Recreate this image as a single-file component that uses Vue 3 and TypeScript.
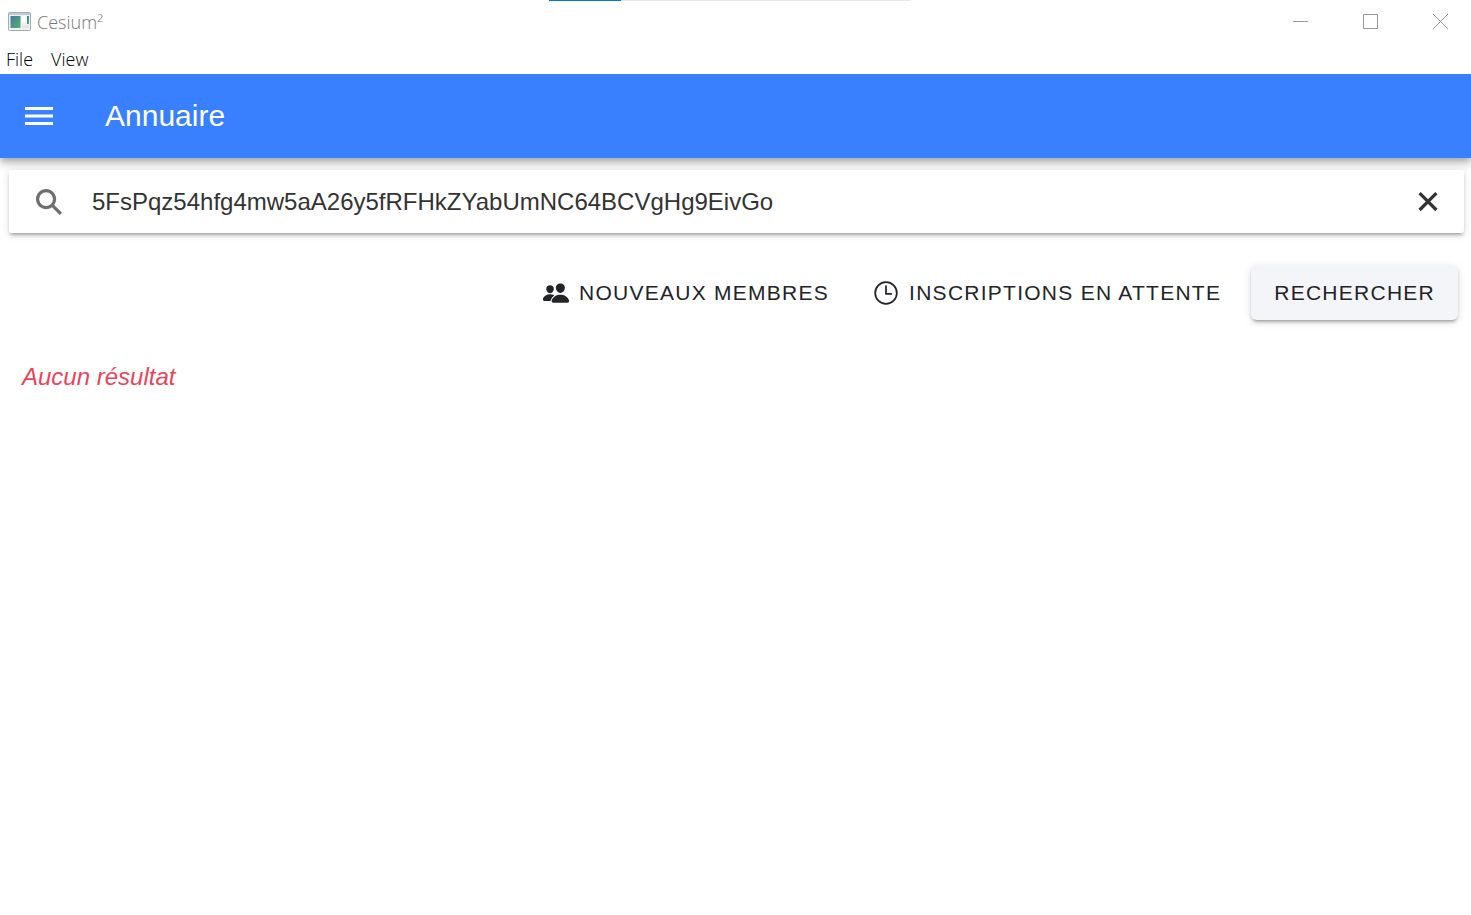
<script setup lang="ts">
import { ref } from 'vue'

const query = ref('5FsPqz54hfg4mw5aA26y5fRFHkZYabUmNC64BCVgHg9EivGo')
const menus: string[] = ['File', 'View']
</script>

<template>
  <div class="window">
    <div class="progress"><div class="progress-value"></div></div>

    <div class="titlebar">
      <svg class="app-icon" width="24" height="20" viewBox="0 0 24 20" aria-hidden="true">
        <defs>
          <linearGradient id="screen" x1="0" y1="0" x2="1" y2="1">
            <stop offset="0" stop-color="#3f78a8" />
            <stop offset="1" stop-color="#58b36c" />
          </linearGradient>
        </defs>
        <rect x="0.5" y="0.5" width="22" height="18" rx="1" fill="#eef0f1" stroke="#a3abb2" />
        <rect x="1" y="1" width="21" height="2" fill="#c3cad0" />
        <rect x="2.5" y="4" width="10" height="12" fill="url(#screen)" />
        <rect x="14" y="4" width="4" height="7" fill="#fafafa" />
        <rect x="19" y="4" width="2" height="8" fill="url(#screen)" />
        <rect x="14" y="13" width="7" height="3" fill="#e2e4e5" />
      </svg>
      <span class="app-name">Cesium²</span>
      <div class="window-controls">
        <button type="button" aria-label="Minimize">
          <svg width="15" height="15" viewBox="0 0 15 15"><path d="M0 7.5H15" /></svg>
        </button>
        <button type="button" aria-label="Maximize">
          <svg width="15" height="15" viewBox="0 0 15 15"><path d="M.5.5H14.5V14.5H.5Z" /></svg>
        </button>
        <button type="button" aria-label="Close">
          <svg width="15" height="15" viewBox="0 0 15 15"><path d="M0 0L15 15M15 0L0 15" /></svg>
        </button>
      </div>
    </div>

    <nav class="menubar">
      <button v-for="menu in menus" :key="menu" type="button">{{ menu }}</button>
    </nav>

    <header class="header">
      <button class="menu-button" type="button" aria-label="Menu">
        <svg width="28" height="20" viewBox="0 0 28 20">
          <path d="M0 2.5H28M0 10H28M0 17.5H28" fill="none" stroke="#fff" stroke-width="3" />
        </svg>
      </button>
      <h1>Annuaire</h1>
    </header>

    <main>
      <form class="searchbar" role="search" @submit.prevent>
        <svg class="search-icon" width="32" height="32" viewBox="0 0 512 512" aria-hidden="true">
          <path d="M464 428L339.92 303.9a160.48 160.48 0 0030.72-94.58C370.64 120.37 298.27 48 209.32 48S48 120.37 48 209.32s72.37 161.32 161.32 161.32a160.48 160.48 0 0094.58-30.72L428 464zM209.32 319.69a110.38 110.38 0 11110.37-110.37 110.5 110.5 0 01-110.37 110.37z" />
        </svg>
        <input v-model="query" type="text" aria-label="Rechercher" spellcheck="false" />
        <button class="clear" type="button" aria-label="Effacer" @click="query = ''">
          <svg width="20" height="20" viewBox="0 0 20 20">
            <path d="M1.6 1.2L18.4 18M18.4 1.2L1.6 18" fill="none" stroke="#333" stroke-width="3.2" />
          </svg>
        </button>
      </form>

      <div class="actions">
        <button class="action" type="button">
          <svg width="28" height="28" viewBox="0 0 512 512" aria-hidden="true">
            <path fill="currentColor" d="M336 256c-20.56 0-40.44-9.18-56-25.84-15.13-16.25-24.37-37.92-26-61-1.74-24.62 5.77-47.26 21.14-63.76S312 80 336 80c23.83 0 45.38 9.06 60.7 25.52 15.47 16.62 23 39.22 21.26 63.63-1.67 23.11-10.9 44.77-26 61C376.44 246.82 356.57 256 336 256zM467.83 432H204.18a27.71 27.71 0 01-22-10.67 30.22 30.22 0 01-5.26-25.79c8.42-33.81 29.28-61.85 60.32-81.08C264.79 297.4 299.86 288 336 288c36.85 0 71 9 98.71 26.05 31.11 19.13 52 47.33 60.38 81.55a30.27 30.27 0 01-5.32 25.78A27.68 27.68 0 01467.83 432zM147 260c-35.19 0-66.13-32.72-69-72.93-1.42-20.6 5-39.65 18-53.62 12.86-13.83 31-21.45 51-21.45s38 7.66 50.93 21.57c13.1 14.08 19.5 33.09 18 53.52-2.87 40.2-33.8 72.91-68.93 72.91zM212.66 291.45c-17.59-8.6-40.42-12.9-65.65-12.9-29.46 0-58.07 7.68-80.57 21.62-25.51 15.83-42.67 38.88-49.6 66.71a27.39 27.39 0 004.79 23.36A25.32 25.32 0 0041.72 400h111a8 8 0 007.87-6.57c.11-.63.25-1.26.41-1.88 8.48-34.06 28.35-62.84 57.71-83.82a8 8 0 00-.63-13.39c-1.57-.92-3.37-1.89-5.42-2.89z" />
          </svg>
          <span>NOUVEAUX MEMBRES</span>
        </button>
        <button class="action" type="button">
          <svg width="28" height="28" viewBox="0 0 512 512" aria-hidden="true">
            <g fill="none" stroke="currentColor" stroke-width="32">
              <circle cx="256" cy="256" r="198" />
              <path d="M256 128v144h96" stroke-linecap="round" stroke-linejoin="round" />
            </g>
          </svg>
          <span>INSCRIPTIONS EN ATTENTE</span>
        </button>
        <button class="action solid" type="button">RECHERCHER</button>
      </div>

      <p class="empty">Aucun résultat</p>
    </main>
  </div>
</template>

<style>
body {
  margin: 0;
  background: #fff;
}
</style>

<style scoped>
.window {
  min-height: 100vh;
  background: #fff;
  font-family: "Liberation Sans", Arial, sans-serif;
}

button {
  margin: 0;
  padding: 0;
  border: 0;
  background: none;
  color: inherit;
  font: inherit;
}

svg {
  display: block;
  flex: none;
}

.progress {
  position: absolute;
  z-index: 2;
  top: 0;
  left: 549px;
  width: 361px;
  height: 1px;
  background: #e6e6e6;
}

.progress-value {
  width: 20%;
  height: 1px;
  background: #0078d7;
}

.titlebar,
.menubar {
  position: relative;
  z-index: 1;
  display: flex;
  background: #fff;
  font-family: "Open Sans", "Noto Sans", sans-serif;
  font-size: 18px;
  font-weight: 300;
}

.titlebar {
  align-items: center;
  height: 43px;
  padding: 0 23px 0 8px;
  color: #777;
}

.app-name {
  margin-left: 5px;
}

.window-controls {
  display: flex;
  gap: 55px;
  margin-left: auto;
}

.window-controls path {
  fill: none;
  stroke: #999;
  stroke-width: 1;
}

.menubar {
  gap: 18px;
  height: 31px;
  padding-left: 6px;
  color: #000;
}

.header {
  display: flex;
  align-items: center;
  height: 84px;
  padding-left: 25px;
  background: #3880ff;
  color: #fff;
  box-shadow: 0 3px 6px -1px rgba(0, 0, 0, 0.2), 0 6px 8px 0 rgba(0, 0, 0, 0.14), 0 2px 15px 0 rgba(0, 0, 0, 0.12);
}

h1 {
  margin: 0 0 0 52px;
  font-size: 30px;
  font-weight: 500;
  line-height: 36px;
}

.searchbar {
  position: relative;
  display: flex;
  align-items: center;
  height: 63px;
  margin: 12px 7px 0 9px;
  padding: 0 26px 0 24px;
  border-radius: 3px;
  background: #fff;
  box-shadow: 0 3px 3px 0 rgba(0, 0, 0, 0.14), 0 4px 2px -3px rgba(0, 0, 0, 0.2), 0 2px 8px 0 rgba(0, 0, 0, 0.12);
}

.search-icon {
  fill: #6e6e6e;
}

.searchbar input {
  flex: 1;
  min-width: 0;
  height: 45px;
  margin-left: 27px;
  padding: 0;
  border: 0;
  outline: 0;
  background: transparent;
  color: #333;
  font: 24px "Liberation Sans", Arial, sans-serif;
}

.actions {
  display: flex;
  justify-content: flex-end;
  margin: 32px 13px 0;
  gap: 17px;
}

.action {
  display: flex;
  align-items: center;
  gap: 9px;
  height: 55px;
  padding: 0 13px;
  border-radius: 6px;
  color: #222428;
  font-size: 21px;
  line-height: 26px;
  letter-spacing: 0.06em;
  white-space: nowrap;
}

.solid {
  padding: 0 23px;
  background: #f4f5f8;
  box-shadow: 0 4px 2px -3px rgba(0, 0, 0, 0.2), 0 3px 3px 0 rgba(0, 0, 0, 0.14), 0 2px 8px 0 rgba(0, 0, 0, 0.12);
}

.empty {
  margin: 42px 22px 0;
  color: #eb445a;
  font-size: 24px;
  font-style: italic;
  line-height: 30px;
}
</style>
